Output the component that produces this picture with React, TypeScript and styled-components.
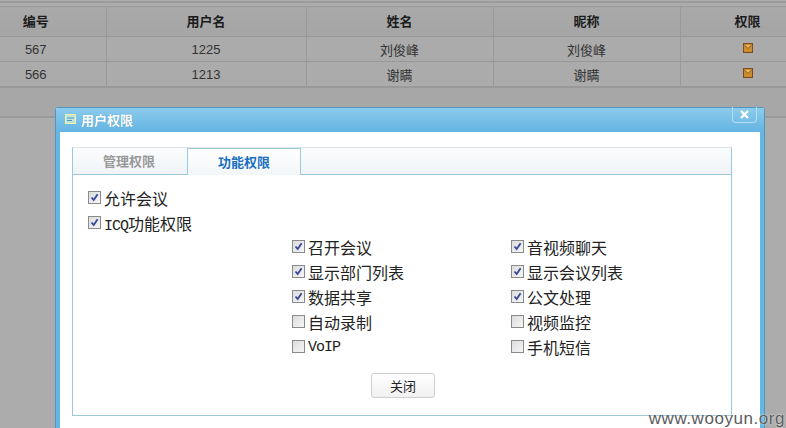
import styled, { createGlobalStyle } from "styled-components";

const GlobalStyle = createGlobalStyle`
  html, body {
    margin: 0;
    padding: 0;
    background: #ababab;
  }
`;

const Page = styled.div`
  position: relative;
  width: 786px;
  height: 428px;
  overflow: hidden;
  background: #acacac;
  font-family: "Liberation Sans", "Noto Sans CJK SC", sans-serif;
  color: #2c2c2c;
`;

const TopRule = styled.div`
  height: 2px;
  margin-top: 1px;
  background: #9c9c9c;
`;

const Table = styled.table`
  width: 849px;
  margin: 3px 0 0 -34px;
  border-collapse: collapse;
  table-layout: fixed;
  border-top: 1px solid #9a9a9a;
  border-bottom: 2px solid #999;
`;

const HeadCell = styled.th<{ $w: number }>`
  box-sizing: border-box;
  width: ${(p) => p.$w}px;
  height: 30px;
  padding: 0 0 2px;
  background: linear-gradient(#a9a9a9, #a5a5a5);
  border-right: 1px solid #999;
  border-bottom: 1px solid #989898;
  font-size: 13px;
  font-weight: 700;
  color: #1c1c1c;
  text-align: center;
`;

const Cell = styled.td`
  height: 24px;
  padding: 0;
  background: #ababab;
  border-right: 1px solid #999;
  border-bottom: 1px solid #989898;
  font-size: 13px;
  color: #333;
  text-align: center;
  tr:last-child & {
    border-bottom: 0;
    height: 24px;
  }
`;

const Footer = styled.div`
  height: 28px;
  background: #a7a7a7;
  border-bottom: 2px solid #9a9a9a;
`;

const Dialog = styled.div`
  position: absolute;
  left: 55px;
  top: 107px;
  box-sizing: border-box;
  width: 710px;
  height: 340px;
  border: 1px solid #4f97bd;
  border-radius: 3px 3px 0 0;
  padding: 0 4px;
  background: #66b6e4;
  display: flex;
  flex-direction: column;
`;

const DialogHeader = styled.div`
  box-sizing: border-box;
  height: 24px;
  flex: none;
  margin: 0 -4px;
  padding: 0 5px 2px 9px;
  background: linear-gradient(#8ccbec, #64b4e3);
  display: flex;
  align-items: center;
  gap: 5px;
`;

const DialogTitle = styled.span`
  font-size: 13px;
  font-weight: 700;
  color: #fff;
  text-shadow: 0 0 1px #4d93bb;
`;

const CloseTab = styled.div`
  position: absolute;
  top: -1px;
  right: 7px;
  width: 23px;
  height: 15px;
  border: 1px solid #b5def3;
  border-top: 0;
  border-radius: 0 0 4px 4px;
  display: flex;
  align-items: center;
  justify-content: center;
`;

const DialogBody = styled.div`
  flex: 1;
  background: #fff;
  padding: 15px 28px 0 12px;
`;

const TabPanel = styled.div`
  height: 267px;
  border: 1px solid #9cc8dc;
  border-top-color: #dfe6ea;
`;

const TabStrip = styled.div`
  height: 26px;
  display: flex;
  background: linear-gradient(#fbfcfd, #f0f4f7);
  border-bottom: 1px solid #9cc8dc;
`;

const Tab = styled.div<{ $active?: boolean }>`
  width: 114px;
  height: ${(p) => (p.$active ? 27 : 26)}px;
  box-sizing: border-box;
  padding: ${(p) => (p.$active ? "0 0 2px" : "0 2px 2px 0")};
  display: flex;
  align-items: center;
  justify-content: center;
  font-size: 13px;
  font-weight: 700;
  color: ${(p) => (p.$active ? "#1a6fc0" : "#999")};
  background: ${(p) => (p.$active ? "linear-gradient(#fff, #f3f6f9)" : "transparent")};
  border-right: 1px solid ${(p) => (p.$active ? "#9cc8dc" : "transparent")};
  border-left: 1px solid ${(p) => (p.$active ? "#9cc8dc" : "transparent")};
  border-top: ${(p) => (p.$active ? "1px solid #9cc8dc" : "0")};
`;

const TabContent = styled.div`
  padding: 10px 0 0 15px;
  display: flex;
  flex-direction: column;
`;

const Option = styled.div`
  height: 25px;
  display: flex;
  align-items: center;
  gap: 3px;
  font-size: 16px;
  color: #222;
  white-space: nowrap;
`;

const Latin = styled.span`
  font-family: "Liberation Mono", monospace;
  font-size: 15px;
  letter-spacing: -1px;
`;

const Box = styled.span`
  width: 11px;
  height: 11px;
  flex: none;
  border: 1px solid #8a8a8a;
  background: linear-gradient(135deg, #dcdcdc, #f6f6f6);
  display: flex;
`;

const OptionGrid = styled.div`
  display: grid;
  grid-template-columns: 219px 219px;
  margin: -1px 0 0 204px;
`;

const ButtonRow = styled.div`
  display: flex;
  justify-content: center;
  padding: 14px 0 0 0;
  margin-left: -13px;
`;

const CloseButton = styled.button`
  width: 64px;
  height: 25px;
  padding: 0;
  border: 1px solid #cfcfcf;
  border-radius: 3px;
  background: linear-gradient(#fff, #f1f1f1);
  font-family: inherit;
  font-size: 13px;
  color: #222;
`;

const Watermark = styled.div`
  position: absolute;
  right: 1px;
  bottom: -1px;
  font-family: "Liberation Sans", sans-serif;
  font-size: 17px;
  letter-spacing: 0.55px;
  color: #5c5c5c;
  text-shadow: 0 0 2px #fff;
`;

const MailIcon = () => (
  <svg width="10" height="10" viewBox="0 0 10 10" style={{ display: "block", margin: "0 auto 3px" }}>
    <rect x="0.5" y="0.5" width="9" height="9" fill="#c98c2e" stroke="#7b4a1c" />
    <path d="M1.5 2l3.5 3.5L8.5 2" fill="#e6b865" stroke="#8a5520" strokeWidth="1" />
  </svg>
);

const TitleIcon = () => (
  <svg width="11" height="10" viewBox="0 0 11 10">
    <rect x="0.5" y="0.5" width="10" height="9" fill="#bfe3e0" stroke="#eef2a0" />
    <path d="M2 4h7M2 6.5h5" stroke="#4a94b5" />
  </svg>
);

const CloseIcon = () => (
  <svg width="9" height="9" viewBox="0 0 9 9">
    <path d="M1 1l7 7M8 1L1 8" stroke="#fff" strokeWidth="2.4" />
  </svg>
);

const Check = ({ on }: { on?: boolean }) => (
  <Box>
    {on && (
      <svg width="11" height="11" viewBox="0 0 11 11">
        <path d="M2.5 5.5l2.2 2.6L8.6 2.2" fill="none" stroke="#37479c" strokeWidth="1.8" />
      </svg>
    )}
  </Box>
);

const users = [
  { id: 567, login: "1225", name: "刘俊峰" },
  { id: 566, login: "1213", name: "谢瞒" },
];

const options: { label: React.ReactNode; on?: boolean }[] = [
  { label: "召开会议", on: true },
  { label: "音视频聊天", on: true },
  { label: "显示部门列表", on: true },
  { label: "显示会议列表", on: true },
  { label: "数据共享", on: true },
  { label: "公文处理", on: true },
  { label: "自动录制" },
  { label: "视频监控" },
  { label: <span><Latin>VoIP</Latin></span> },
  { label: "手机短信" },
];

export default function App() {
  return (
    <Page>
      <GlobalStyle />
      <TopRule />
      <Table>
        <thead>
          <tr>
            <HeadCell $w={140}>编号</HeadCell>
            <HeadCell $w={200}>用户名</HeadCell>
            <HeadCell $w={187}>姓名</HeadCell>
            <HeadCell $w={187}>昵称</HeadCell>
            <HeadCell $w={135}>权限</HeadCell>
          </tr>
        </thead>
        <tbody>
          {users.map((u) => (
            <tr key={u.id}>
              <Cell>{u.id}</Cell>
              <Cell>{u.login}</Cell>
              <Cell>{u.name}</Cell>
              <Cell>{u.name}</Cell>
              <Cell>
                <MailIcon />
              </Cell>
            </tr>
          ))}
        </tbody>
      </Table>
      <Footer />

      <Dialog>
        <DialogHeader>
          <TitleIcon />
          <DialogTitle>用户权限</DialogTitle>
        </DialogHeader>
        <CloseTab>
          <CloseIcon />
        </CloseTab>
        <DialogBody>
          <TabPanel>
            <TabStrip>
              <Tab>管理权限</Tab>
              <Tab $active>功能权限</Tab>
            </TabStrip>
            <TabContent>
              <Option>
                <Check on />
                允许会议
              </Option>
              <Option>
                <Check on />
                <span>
                  <Latin>ICQ</Latin>功能权限
                </span>
              </Option>
              <OptionGrid>
                {options.map((o, i) => (
                  <Option key={i}>
                    <Check on={o.on} />
                    {o.label}
                  </Option>
                ))}
              </OptionGrid>
              <ButtonRow>
                <CloseButton>关闭</CloseButton>
              </ButtonRow>
            </TabContent>
          </TabPanel>
        </DialogBody>
      </Dialog>

      <Watermark>www.wooyun.org</Watermark>
    </Page>
  );
}
